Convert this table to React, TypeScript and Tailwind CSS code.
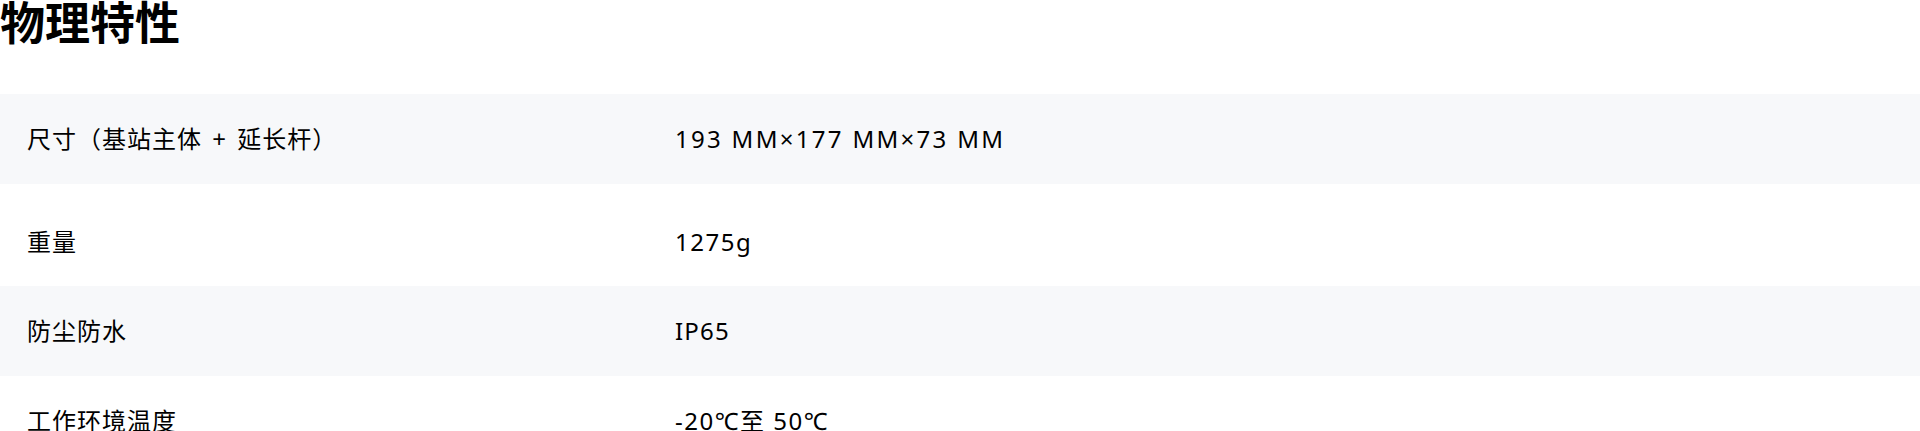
const rows = [
  { label: '尺寸（基站主体 + 延长杆）', value: '193 MM×177 MM×73 MM', cls: 'h-[90px] bg-[#f7f8fa]', vcls: 'tracking-[2.3px]' },
  { label: '重量', value: '1275g', cls: 'h-[102px] pt-[13px] bg-white', vcls: 'tracking-[1.5px]' },
  { label: '防尘防水', value: 'IP65', cls: 'h-[90px] bg-[#f7f8fa]', vcls: 'tracking-[1.2px]' },
  { label: '工作环境温度', value: '-20℃至 50℃', cls: 'h-[90px] bg-white', vcls: 'tracking-[1.5px]' },
];

export default function App() {
  return (
    <div className="w-[1920px] bg-white text-black font-['Noto_Sans','Noto_Sans_CJK_SC',sans-serif] [text-spacing-trim:space-all]">
      {/* 标题 */}
      <h2 className="h-[94px] text-[45px] leading-[46px] font-bold">物理特性</h2>

      {/* 参数表 */}
      <div className="flex flex-col">
        {rows.map((r) => (
          <div key={r.label} className={`grid grid-cols-[648px_1fr] items-center text-[24px] ${r.cls}`}>
            <div className="pl-[27px] tracking-[1px] [word-spacing:3px]">{r.label}</div>
            <div className={`pl-[27px] ${r.vcls}`}>{r.value}</div>
          </div>
        ))}
      </div>
    </div>
  );
}
